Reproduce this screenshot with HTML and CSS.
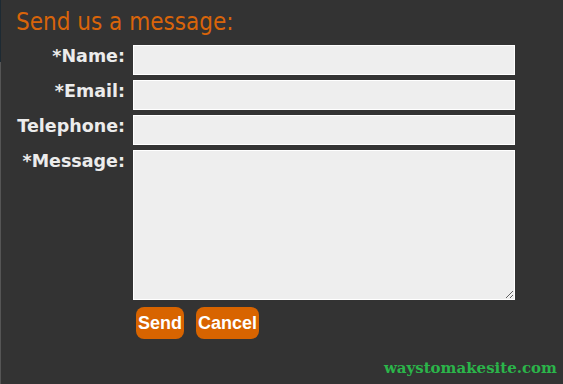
FILE: index.html
```html
<!DOCTYPE html>
<html lang="en">
<head>
<meta charset="utf-8">
<title>Send us a message</title>
<link rel="stylesheet" href="styles.css">
</head>
<body>
<div class="page">
  <div class="edge"></div>
  <main class="main">
    <h1 class="title">Send us a message:</h1>
    <form class="form">
      <label class="label" for="name">*Name:</label>
      <input class="field" id="name" type="text" autofocus>
      <label class="label" for="email">*Email:</label>
      <input class="field" id="email" type="text">
      <label class="label" for="tel">Telephone:</label>
      <input class="field" id="tel" type="text">
      <label class="label" for="msg">*Message:</label>
      <textarea class="area" id="msg"></textarea>
      <div class="actions">
        <button class="btn" type="button">Send</button>
        <button class="btn" type="button">Cancel</button>
      </div>
    </form>
    <div class="footer">waystomakesite.com</div>
  </main>
</div>
</body>
</html>
```
FILE: styles.css
```css
html, body {
  margin: 0;
  padding: 0;
  background: #333333;
  height: 100%;
}
.page {
  display: flex;
  height: 384px;
}
.edge {
  width: 1px;
  flex: none;
  background: linear-gradient(to bottom, #1d2a33 0, #1d2a33 62px, #555555 62px, #555555 100%);
}
.main {
  flex: 1;
  display: flex;
  flex-direction: column;
  padding-left: 15px;
}
.title {
  margin: 8px 0 0 0;
  font-family: "DejaVu Sans Condensed", "DejaVu Sans", sans-serif;
  font-weight: normal;
  font-size: 24px;
  line-height: 28px;
  color: #d8640a;
}
.form {
  margin-top: 9px;
  display: grid;
  grid-template-columns: 109px 382px;
  column-gap: 8px;
  row-gap: 5px;
  align-items: start;
}
.label {
  text-align: right;
  font-family: "DejaVu Sans", sans-serif;
  font-weight: bold;
  font-size: 17.5px;
  line-height: 20px;
  padding-top: 1px;
  color: #ececec;
  white-space: nowrap;
}
.field, .area {
  box-sizing: border-box;
  width: 382px;
  margin: 0;
  border: 1px solid #ffffff;
  background: #eeeeee;
  font-family: "Liberation Sans", sans-serif;
  font-size: 14px;
  color: #333;
  caret-color: #333;
  outline: none;
  border-radius: 0;
}
.field {
  height: 30px;
  padding: 0 3px;
}
.area {
  height: 150px;
  resize: vertical;
  padding: 3px;
}
.actions {
  grid-column: 2;
  display: flex;
  gap: 12px;
  padding-left: 3px;
  margin-top: 2px;
}
.btn {
  height: 32px;
  padding: 0 2px;
  border: none;
  border-radius: 8px;
  background: #d86400;
  color: #ffffff;
  font-family: "Liberation Sans", sans-serif;
  font-weight: bold;
  font-size: 18px;
}
.footer {
  margin-top: auto;
  align-self: flex-end;
  margin-right: 6px;
  margin-bottom: 7px;
  font-family: "DejaVu Serif", serif;
  font-weight: bold;
  font-size: 15px;
  color: #2bb54a;
}
```
